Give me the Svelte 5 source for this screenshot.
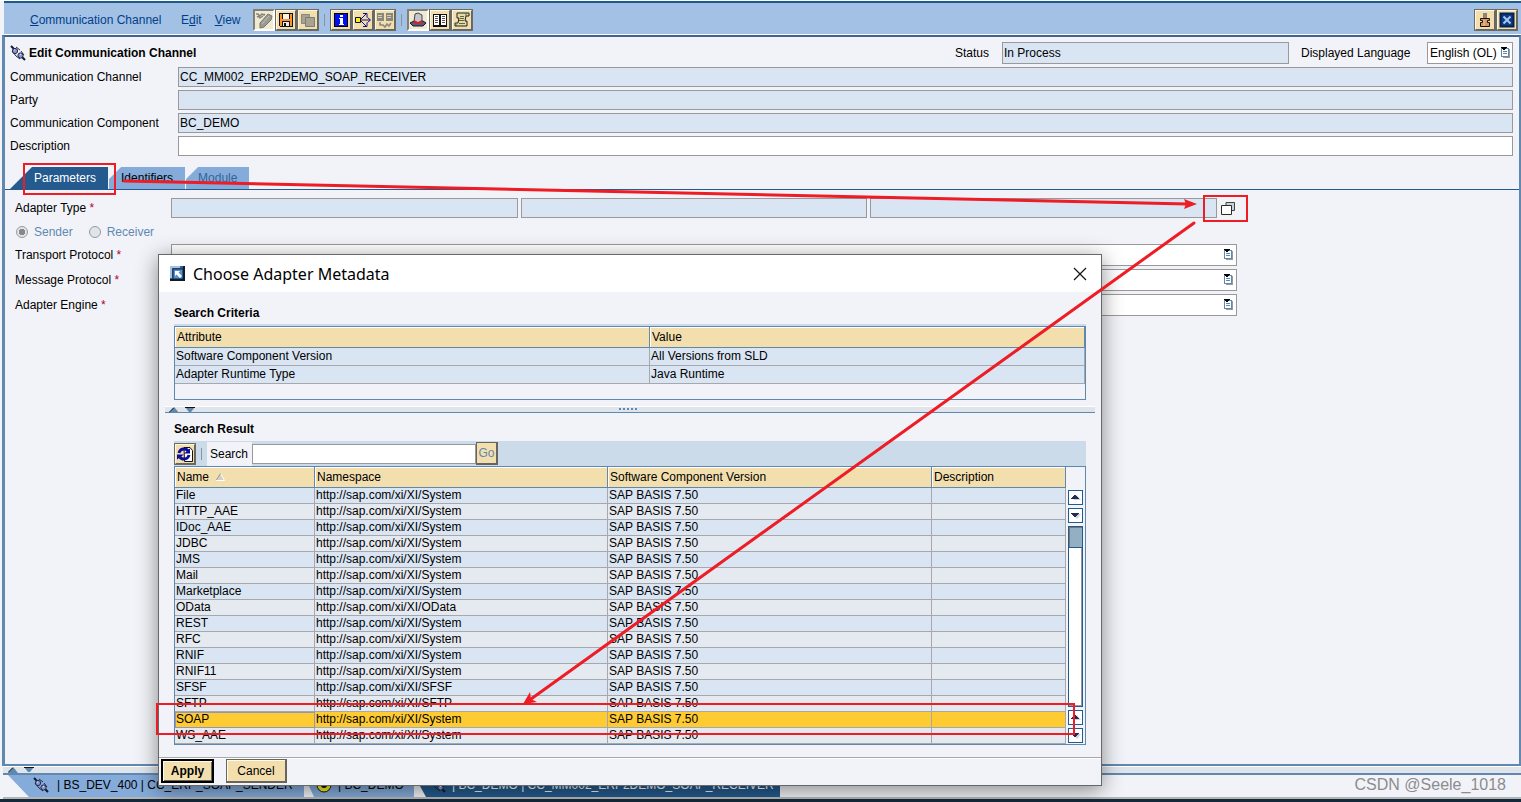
<script>
  const criteria = [
    ["Software Component Version", "All Versions from SLD"],
    ["Adapter Runtime Type", "Java Runtime"],
  ];

  const base = "http://sap.com/xi/XI/";
  const adapters = [
    ["File", "System"],
    ["HTTP_AAE", "System"],
    ["IDoc_AAE", "System"],
    ["JDBC", "System"],
    ["JMS", "System"],
    ["Mail", "System"],
    ["Marketplace", "System"],
    ["OData", "OData"],
    ["REST", "System"],
    ["RFC", "System"],
    ["RNIF", "System"],
    ["RNIF11", "System"],
    ["SFSF", "SFSF"],
    ["SFTP", "SFTP"],
    ["SOAP", "System"],
    ["WS_AAE", "System"],
  ];

  let selected = $state("SOAP");

  const fields = [
    { id: "channel", label: "Communication Channel", value: "CC_MM002_ERP2DEMO_SOAP_RECEIVER", locked: true },
    { id: "party", label: "Party", value: "", locked: true },
    { id: "component", label: "Communication Component", value: "BC_DEMO", locked: true },
    { id: "description", label: "Description", value: "", locked: false },
  ];

  const protocols = ["Transport Protocol", "Message Protocol", "Adapter Engine"];
</script>

{#snippet plug()}
  <svg class="plug" width="16" height="16" viewBox="0 0 16 16" aria-hidden="true">
    <path d="M1 1l4 4M11 11l4 4" stroke="#111a33" stroke-width="2" />
    <path d="M2 6l4 5M6 2l4 3M6 11l4 3M11 6l3 4" stroke="#20264a" />
    <circle cx="5" cy="6" r="2.6" fill="#8e98c8" stroke="#20264a" />
    <circle cx="10.5" cy="10.5" r="2.6" fill="#8e98c8" stroke="#20264a" />
    <path d="M4 5h1M10 9.500h1" stroke="#dde2f5" />
  </svg>
{/snippet}

{#snippet listIcon()}
  <svg class="list-icon" width="10" height="12" viewBox="0 0 10 12" shape-rendering="crispEdges" aria-hidden="true">
    <path d="M2 2h7v9h-7z" fill="#999" />
    <path d="M0 1h8v9h-8z" fill="#5f88ae" />
    <path d="M1 2h6v7h-6z" fill="#fff" />
    <path d="M2 4h4v1h-4zM2 6h4v1h-4z" fill="#5f88ae" />
    <path d="M0 0h6v1h-1v1h-1v1h-2v-1h-1v-1h-1z" fill="#000" />
  </svg>
{/snippet}

{#snippet grips()}
  <svg width="30" height="6" viewBox="0 0 30 6" aria-hidden="true">
    <path d="M0 6l4-5h2l4 5z" fill="#5f88ae" />
    <path d="M0 5.500l5-5" stroke="#111" />
    <path d="M16 0h10l-4 5h-2z" fill="#5f88ae" />
    <path d="M16 0.500h10" stroke="#111" />
  </svg>
{/snippet}

{#snippet arrow(down)}
  <button type="button" class="step" aria-label={down ? "Scroll down" : "Scroll up"}>
    <svg width="11" height="9" viewBox="0 0 11 9" aria-hidden="true">
      {#if down}
        <path d="M3 3h8l-4 5z" fill="#c5d3e6" />
        <path d="M1 2h8v1h-1v1h-1v1h-1v1h-2v-1h-1v-1h-1v-1h-1z" fill="#262b4b" />
      {:else}
        <path d="M3 7h8l-4-5z" fill="#c5d3e6" />
        <path d="M1 6h8v-1h-1v-1h-1v-1h-1v-1h-2v1h-1v1h-1v1h-1z" fill="#262b4b" />
      {/if}
    </svg>
  </button>
{/snippet}

<div class="screen">
  <div class="toolbar">
    <nav>
      <a href="#channel"><u>C</u>ommunication Channel</a>
      <a href="#edit">E<u>d</u>it</a>
      <a href="#view"><u>V</u>iew</a>
    </nav>
    <div class="tools">
      <button type="button" class="tool pressed" aria-label="Display or change">
        <svg width="18" height="18" viewBox="0 0 18 18">
          <path d="M1 3h2l2 2 2-2 2 1 1-1M2 6l2-1 1 2 3-2" fill="none" stroke="#85857f" stroke-width="1.500" />
          <path d="M5 12l8-9 4 2-1 4-7 7-4 1z" fill="#9a9a92" stroke="#77776f" />
          <path d="M7 13l7-8" stroke="#c6c1ac" />
        </svg>
      </button>
      <button type="button" class="tool" aria-label="Save">
        <svg width="18" height="18" viewBox="0 0 18 18" shape-rendering="crispEdges">
          <path d="M2 2h14v14h-13l-1-1z" fill="#111" />
          <path d="M3 3h2v12h-2zM13 3h2v12h-2zM5 8h8v2h-8z" fill="#f9952b" />
          <path d="M6 3h6v5h-6z" fill="#fdf3e2" />
          <path d="M6 11h6v4h-6z" fill="#e8e8f0" />
          <path d="M7 12h2v3h-2z" fill="#111" />
        </svg>
      </button>
      <button type="button" class="tool" aria-label="Copy">
        <svg width="18" height="18" viewBox="0 0 18 18">
          <path d="M2.500 3.500h8v9h-8z" fill="#a6a294" stroke="#8a877c" />
          <path d="M6.500 6.500h9v9h-9z" fill="#a6a294" stroke="#7e7b72" />
        </svg>
      </button>
      <span class="bar"></span>
      <button type="button" class="tool" aria-label="Information">
        <svg width="18" height="18" viewBox="0 0 18 18" shape-rendering="crispEdges">
          <path d="M2 2h14v14h-14z" fill="#000" />
          <path d="M3 3h12v12h-12z" fill="#0011ee" />
          <path d="M8 4h3v2h-3zM7 7h4v6h1v1h-5v-1h1v-5h-1z" fill="#fff" />
        </svg>
      </button>
      <button type="button" class="tool" aria-label="Where used">
        <svg width="18" height="18" viewBox="0 0 18 18">
          <path d="M6 9h10M6 9l6-6M6 9l6 6M13.500 6.500l3 2.500-3 2.500M9 2.500h4v4M9 15.500h4v-4" fill="none" stroke="#10108a" />
          <path d="M1.500 6.500h5v5h-5z" fill="#f8ee28" stroke="#111" />
        </svg>
      </button>
      <button type="button" class="tool" aria-label="Compare">
        <svg width="18" height="18" viewBox="0 0 18 18">
          <path d="M1 2h7v8h-7zM10 2h7v8h-7z" fill="#88887f" />
          <path d="M2 4.500h4M2 6.500h4M11 4.500h4M11 6.500h4" stroke="#d8d0b2" />
          <path d="M4 11v3h3l2 2 2-3 2 2 2-3" fill="none" stroke="#88887f" stroke-width="1.500" />
        </svg>
      </button>
      <span class="bar"></span>
      <button type="button" class="tool pressed" aria-label="Local view">
        <svg width="18" height="18" viewBox="0 0 18 18">
          <path d="M1 12l4-2h9l3 2-3 3h-10z" fill="#5a5a78" stroke="#181828" />
          <path d="M5 11l1-8 3-1 4 2v7l-4 1z" fill="#c4c7d2" stroke="#444" />
          <path d="M5 9l4 2 4-2v3l-4 1-4-1z" fill="#d8202a" />
        </svg>
      </button>
      <button type="button" class="tool" aria-label="Documentation">
        <svg width="18" height="18" viewBox="0 0 18 18" shape-rendering="crispEdges">
          <path d="M2 3h14v13h-14z" fill="#111" />
          <path d="M3 4h5v10h-5zM10 4h5v10h-5z" fill="#fff" />
          <path d="M4 5.500h3M4 7.500h3M4 9.500h3M4 11.500h3M11 5.500h3M11 7.500h3M11 9.500h3M11 11.500h3" stroke="#555" />
        </svg>
      </button>
      <button type="button" class="tool" aria-label="History">
        <svg width="18" height="18" viewBox="0 0 18 18">
          <path d="M4 2h12v3h-3l-1 5h2v5h-12v-3h3l1-5h-2z" fill="#e2dca6" stroke="#222" />
          <path d="M7 5.500h4M7 7.500h4M6 9.500h5M6 12.500h6M13 2v3M2 12l2 3" stroke="#66643c" />
        </svg>
      </button>
    </div>
    <div class="tools far">
      <button type="button" class="tool" aria-label="Pin">
        <svg width="18" height="18" viewBox="0 0 18 18">
          <path d="M9 2v5" stroke="#222" stroke-width="3" />
          <path d="M9 2v5" stroke="#eee" />
          <path d="M4.500 7.500h9v2h-2v2h2v4h-9v-4h2v-2h-2z" fill="#d39a68" stroke="#1a1108" />
          <path d="M8 9v6" stroke="#f3c79c" />
        </svg>
      </button>
      <button type="button" class="tool" aria-label="Close">
        <svg width="18" height="18" viewBox="0 0 18 18">
          <path d="M2.500 2.500h13v13h-13z" fill="#0b3c86" stroke="#06214f" stroke-width="2" />
          <path d="M5.500 5.500l7 7M12.500 5.500l-7 7" stroke="#a9c6ee" stroke-width="2" />
        </svg>
      </button>
    </div>
  </div>

  <main>
    <form>
      <div class="heading">
        {@render plug()}
        <h1>Edit Communication Channel</h1>
        <label class="status-label" for="status">Status</label>
        <input id="status" class="locked" value="In Process" readonly />
        <label class="language-label" for="language">Displayed Language</label>
        <div class="language">
          <select id="language"><option>English (OL)</option></select>
          {@render listIcon()}
        </div>
      </div>
      <div class="fields">
        {#each fields as field (field.id)}
          <label for={field.id}>{field.label}</label>
          <input id={field.id} class:locked={field.locked} value={field.value} readonly={field.locked} />
        {/each}
      </div>
    </form>

    <div class="tabs" role="tablist">
      <button type="button" role="tab" class="tab active" aria-selected="true">Parameters</button>
      <button type="button" role="tab" class="tab" aria-selected="false">Identifiers</button>
      <button type="button" role="tab" class="tab muted" aria-selected="false">Module</button>
    </div>

    <section class="params">
      <div class="row adapter">
        <label for="adapter-name">Adapter Type <i>*</i></label>
        <input id="adapter-name" class="locked" readonly />
        <input class="locked" aria-label="Adapter namespace" readonly />
        <input class="locked" aria-label="Adapter software component version" readonly />
        <button type="button" class="pick" aria-label="Choose adapter">
          <svg width="15" height="15" viewBox="0 0 15 15">
            <path d="M5 1.500h8.500v8h-8.500z" fill="#c3d3dc" stroke="#46463e" />
            <path d="M0.500 4.500h10v9h-10z" fill="#fff" stroke="#2c2c24" />
          </svg>
        </button>
      </div>
      <div class="direction">
        <label><input type="radio" name="direction" checked disabled />Sender</label>
        <label><input type="radio" name="direction" disabled />Receiver</label>
      </div>
      {#each protocols as protocol, i}
        <div class="row">
          <label for="protocol-{i}">{protocol} <i>*</i></label>
          <div class="combo">
            <select id="protocol-{i}"><option></option></select>
            {@render listIcon()}
          </div>
        </div>
      {/each}
    </section>
  </main>

  <div class="splitter">{@render grips()}</div>

  <div class="objects">
    <button type="button" class="object first">{@render plug()}<span>| BS_DEV_400 | CC_ERP_SOAP_SENDER</span></button>
    <button type="button" class="object second">
      <svg width="16" height="16" viewBox="0 0 16 16" aria-hidden="true">
        <circle cx="8" cy="8" r="7" fill="#f5ec1d" stroke="#111" />
        <circle cx="8" cy="8" r="3" fill="#111" />
      </svg>
      <span>| BC_DEMO</span>
    </button>
    <button type="button" class="object third">{@render plug()}<span>| BC_DEMO | CC_MM002_ERP2DEMO_SOAP_RECEIVER</span></button>
    <span class="credit">CSDN @Seele_1018</span>
  </div>
  <div class="taskbar"></div>

  <div class="dialog" role="dialog" aria-labelledby="dialog-title">
    <header>
      <svg width="17" height="17" viewBox="0 0 17 17" aria-hidden="true">
        <path d="M1 1h15v15h-15z" fill="#0d1b2c" />
        <path d="M1 1h13v13h-13z" fill="#2f62a0" />
        <path d="M1 1h10v2h-8v10h-2z" fill="#9fc3e8" />
        <path d="M4 4h10v10h-10z" fill="#5b8fca" stroke="#123" />
        <path d="M6 6h5l-1.500 1.500 3.500 3.500-2 2-3.500-3.500-1.500 1.500z" fill="#fff" />
      </svg>
      <h2 id="dialog-title">Choose Adapter Metadata</h2>
      <button type="button" class="close" aria-label="Close dialog">
        <svg width="14" height="14" viewBox="0 0 14 14"><path d="M1 1l12 12M13 1l-12 12" stroke="#111" stroke-width="1.200" /></svg>
      </button>
    </header>

    <h3>Search Criteria</h3>
    <div class="criteria">
      <table>
        <thead>
          <tr><th>Attribute</th><th>Value</th></tr>
        </thead>
        <tbody>
          {#each criteria as [attribute, value]}
            <tr><td>{attribute}</td><td>{value}</td></tr>
          {/each}
        </tbody>
      </table>
    </div>

    <div class="divider">
      {@render grips()}
      <svg class="dots" width="20" height="3" viewBox="0 0 20 3" aria-hidden="true">
        <path d="M0 1h20" stroke="#5f88ae" stroke-width="2" stroke-dasharray="2 2" />
      </svg>
    </div>

    <h3>Search Result</h3>
    <div class="search">
      <button type="button" class="tool" aria-label="Refresh">
        <svg width="18" height="18" viewBox="0 0 18 18">
          <path d="M8 2.500h6l2.500 3v11h-8z" fill="#fff" stroke="#111" />
          <path d="M3 8q1-4 5-4 3 0 4 2M13 10q-1 4-5 4-3 0-4-2" fill="none" stroke="#0b0b9c" stroke-width="3" />
          <path d="M8 8.500h6v-5zM1 9.500h7l-7 5z" fill="#0b0b9c" />
        </svg>
      </button>
      <span class="bar"></span>
      <label for="search">Search</label>
      <input id="search" />
      <button type="button" class="go">Go</button>
    </div>
    <div class="results">
      <table>
        <colgroup><col class="c-name" /><col class="c-space" /><col class="c-version" /><col /></colgroup>
        <thead>
          <tr>
            <th>Name
              <svg width="9" height="8" viewBox="0 0 9 8" aria-label="ascending">
                <path d="M0.500 7.500h8l-4-7z" fill="#d5cfc0" stroke="#fff" />
                <path d="M0.500 7l4-6.500" stroke="#8d8875" />
              </svg>
            </th>
            <th>Namespace</th>
            <th>Software Component Version</th>
            <th>Description</th>
          </tr>
        </thead>
        <tbody>
          {#each adapters as [name, space] (name)}
            <tr class:selected={name === selected} onclick={() => (selected = name)}>
              <td>{name}</td>
              <td>{base}{space}</td>
              <td>SAP BASIS 7.50</td>
              <td></td>
            </tr>
          {/each}
        </tbody>
      </table>
      <div class="scroll">
        {@render arrow(false)}
        {@render arrow(true)}
        <div class="track"><div class="thumb"></div></div>
        {@render arrow(false)}
        {@render arrow(true)}
      </div>
    </div>

    <footer>
      <button type="button" class="apply">Apply</button>
      <button type="button">Cancel</button>
    </footer>
  </div>

  <svg class="marks" width="1521" height="802" viewBox="0 0 1521 802" aria-hidden="true">
    <g fill="none" stroke="#ee1c24" stroke-width="2">
      <rect x="24" y="164" width="91" height="30" />
      <rect x="1204" y="196" width="43" height="25" />
      <rect x="157" y="704" width="917" height="30" />
    </g>
    <path d="M124 181L1188 204M1194 223L531 699" stroke="#ee1c24" stroke-width="3" stroke-linecap="round" />
    <path d="M1197 204l-13-5 2 5-2 5zM523 704l7-12 1 7 6 3z" fill="#ee1c24" />
  </svg>
</div>

<style>
  :global(body) {
    background: #f2f3f8;
    overflow: hidden;
  }

  .screen {
    position: relative;
    display: flex;
    flex-direction: column;
    box-sizing: border-box;
    min-height: 100vh;
    border-top: 1px solid #fff;
    font: 12px/16px "Liberation Sans", Arial, sans-serif;
    color: #000;
  }

  .screen :is(input, select, button) {
    box-sizing: border-box;
    margin: 0;
    border-radius: 0;
    font: inherit;
    color: inherit;
  }

  input,
  select {
    height: 20px;
    min-width: 0;
    padding: 0 1px;
    border: 1px solid #999;
    background: #fff;
    outline: none;
  }

  select {
    appearance: none;
    width: 100%;
    height: 22px;
    padding: 0 2px;
  }

  button {
    padding: 0;
    border: 0;
    background: none;
  }

  .locked {
    background: #d9e5f3;
  }

  .toolbar {
    display: flex;
    align-items: center;
    height: 34px;
    box-sizing: border-box;
    margin-left: 4px;
    padding: 2px 3px 0 26px;
    border-top: 2px solid #1c5a8a;
    border-bottom: 1px solid #fff;
    background: #a3c0e5;
  }

  nav {
    display: flex;
    gap: 13px;
    width: 223px;
  }

  nav a {
    color: #003f87;
    text-decoration: none;
  }

  nav a:first-child {
    min-width: 138px;
  }

  .tools {
    display: flex;
    align-items: center;
  }

  .far {
    margin-left: auto;
  }

  .tool {
    display: grid;
    place-items: center;
    width: 22px;
    height: 22px;
  }

  .screen .tool {
    border: 2px solid;
    border-color: #fff8df #66665f #66665f #fff8df;
    outline: 1px solid #6b6b66;
    outline-offset: -1px;
    background: #f3dfae;
  }

  .screen .pressed {
    border-color: #808078 #fff #fff #808078;
    outline: none;
    background: #f1ead0;
  }

  .bar {
    width: 1px;
    height: 12px;
    margin: 0 5px;
    background: #8a94a0;
  }

  main {
    flex: 1;
    border: solid #6189b0;
    border-width: 2px 2px 2px 3px;
    border-top-color: #41648a;
    margin-left: 2px;
  }

  .heading {
    display: flex;
    align-items: center;
    height: 22px;
    padding: 5px 6px 3px 5px;
  }

  h1,
  h2,
  h3 {
    margin: 0;
    font-size: 12px;
    line-height: 16px;
  }

  .heading h1 {
    margin-left: 3px;
  }

  .status-label {
    width: 35px;
    margin-left: auto;
    margin-right: 12px;
  }

  .language-label {
    width: 114px;
  }

  .heading input {
    width: 287px;
    height: 22px;
    margin-right: 12px;
  }

  .language {
    width: 86px;
    margin-left: 12px;
  }

  .language,
  .combo {
    position: relative;
    display: flex;
  }

  .list-icon {
    position: absolute;
    top: 5px;
    right: 2px;
    pointer-events: none;
  }

  .fields {
    display: grid;
    grid-template-columns: 168px 1fr;
    row-gap: 3px;
    align-items: center;
    padding: 0 6px 11px 5px;
  }

  .tabs {
    display: flex;
    height: 22px;
    padding-left: 5px;
    border-bottom: 1px solid #245a8d;
  }

  .screen .tab {
    padding: 0 12px 0 24px;
    margin-right: 1px;
    background: #84abda;
    clip-path: polygon(0 100%, 22px 0, 100% 0, 100% 100%);
  }

  .screen .tab:not(.active) {
    padding: 0 12px;
    clip-path: polygon(0 12px, 12px 0, 100% 0, 100% 100%, 0 100%);
  }

  .screen .tab.active {
    background: #245a8d;
    color: #fff;
  }

  .screen .tab.muted {
    color: #2f659c;
  }

  .params {
    padding: 8px 0 0 10px;
  }

  .row {
    display: flex;
    align-items: center;
    width: calc(80% + 19px);
    margin-bottom: 3px;
  }

  .row > label {
    flex: 0 0 156px;
  }

  .row i {
    font-style: normal;
    color: #b00030;
  }

  .adapter {
    gap: 3px;
  }

  .adapter > label {
    flex-basis: 153px;
  }

  .adapter input {
    flex: 1;
  }

  .screen .pick {
    display: flex;
    margin: 0 1px;
  }

  .combo {
    flex: 1;
  }

  .combo .list-icon {
    right: 3px;
  }

  .direction {
    display: flex;
    gap: 15px;
    height: 22px;
    align-items: center;
    margin-bottom: 1px;
    color: #6189b0;
  }

  .direction label {
    display: flex;
    align-items: center;
    gap: 6px;
  }

  .screen .direction input {
    appearance: none;
    width: 12px;
    height: 12px;
    margin-left: 1px;
    padding: 0;
    border: 1px solid #999;
    border-radius: 50%;
    background: #dfe5ec;
  }

  .screen .direction input:checked {
    background: radial-gradient(circle, #888 0 3px, #dfe5ec 3px);
  }

  .splitter {
    display: flex;
    height: 6px;
    margin-left: 3px;
    padding-left: 5px;
    border-top: 1px solid #fff;
    border-bottom: 2px solid #6189b0;
    background: #e0e5ec;
  }

  .objects {
    display: flex;
    height: 22px;
    margin-left: 3px;
    border-bottom: 2px solid #b5b5b5;
  }

  .screen .object {
    display: flex;
    align-items: center;
    gap: 8px;
    background: #84abda;
    padding-bottom: 2px;
  }

  .object span {
    white-space: nowrap;
  }

  .screen .first {
    width: 301px;
    padding-left: 30px;
    clip-path: polygon(5px 0, 100% 0, 100% 100%, 26px 100%);
  }

  .screen .second {
    width: 110px;
    gap: 6px;
    padding-left: 12px;
    clip-path: polygon(0 0, 100% 0, 100% 100%, 10px 100%);
  }

  .screen .third {
    width: 366px;
    gap: 6px;
    padding-left: 16px;
    background: #245a8d;
    color: #fff;
    clip-path: polygon(0 0, 100% 0, 100% 100%, 12px 100%);
  }

  .credit {
    margin: 2px 15px 0 auto;
    font-size: 16px;
    color: #8c8c8f;
  }

  .taskbar {
    height: 3px;
    background: #14293a;
  }

  .dialog {
    position: absolute;
    top: 253px;
    left: 158px;
    width: 942px;
    border: 1px solid #66686c;
    background: #f2f3f8;
    box-shadow: 0 4px 20px rgba(0, 0, 0, 0.45);
  }

  .dialog header {
    display: flex;
    align-items: center;
    height: 37px;
    padding: 0 14px 0 10px;
    background: #fff;
  }

  .dialog h2 {
    margin-left: 7px;
    font: 16px/22px "Noto Sans", sans-serif;
  }

  .screen .close {
    display: flex;
    margin-left: auto;
  }

  .dialog h3 {
    margin-left: 15px;
    padding: 13px 0 5px;
  }

  table {
    width: 100%;
    border-collapse: separate;
    border-spacing: 0;
    table-layout: fixed;
  }

  th {
    height: 20px;
    padding: 0 2px;
    border: solid #5f88ae;
    border-width: 0 1px 1px 0;
    background: #f3dfae;
    box-shadow: inset 1px 1px #fff;
    font-weight: normal;
    text-align: left;
  }

  th svg {
    margin-left: 4px;
  }

  td {
    height: 15px;
    padding: 0 1px;
    border: solid #a8a8ac;
    border-width: 0 1px 1px 0;
    line-height: 15px;
    white-space: nowrap;
  }

  tr:nth-child(odd) td {
    background: #d9e5f3;
  }

  tr:nth-child(even) td {
    background: #e5e9f0;
  }

  .criteria {
    margin: 0 15px;
    padding-bottom: 15px;
    border: 1px solid #5f88ae;
    box-shadow: 0 -2px #cbdbea;
  }

  .criteria th:first-child {
    width: 470px;
  }

  .criteria td {
    height: 17px;
    line-height: 17px;
  }

  .criteria tbody tr:nth-child(n) td {
    background: #d9e5f3;
  }

  .divider {
    position: relative;
    display: flex;
    height: 5px;
    margin: 6px 6px 0;
    padding-left: 4px;
    border-top: 1px solid #fff;
    border-bottom: 1px solid #5f88ae;
    background: #e0e5ec;
  }

  .dots {
    position: absolute;
    top: 1px;
    left: calc(50% - 11px);
  }

  .divider + h3 {
    padding: 8px 0 4px;
  }

  .search {
    display: flex;
    align-items: center;
    height: 25px;
    margin: 0 15px;
    background: #cbdbea;
  }

  .search label {
    padding: 4px 4px 4px 3px;
    background: #f2f3f8;
  }

  .search input {
    width: 224px;
  }

  .screen .go {
    width: 22px;
    height: 23px;
    border: 1px solid #66665f;
    border-width: 1px 2px 2px 1px;
    background: #f3dfae;
    color: #6189b0;
  }

  .results {
    display: flex;
    margin: 0 15px;
    border: 1px solid #5f88ae;
  }

  .c-name {
    width: 140px;
  }

  .c-space {
    width: 293px;
  }

  .c-version {
    width: 324px;
  }

  .selected:nth-child(n) td {
    background: #ffcb32;
  }

  .selected td:first-child {
    outline: 1px solid #9a93b8;
    outline-offset: -1px;
  }

  .scroll {
    display: flex;
    flex: 0 0 19px;
    flex-direction: column;
    align-items: center;
    gap: 3px;
    padding: 23px 0 1px;
    box-sizing: border-box;
  }

  .screen .step {
    display: grid;
    place-items: center;
    width: 15px;
    height: 15px;
    border: 1px solid #245a8d;
    background: #fff;
  }

  .track {
    flex: 1;
    width: 15px;
    box-sizing: border-box;
    border: 1px solid #245a8d;
    background: #fff;
    box-shadow: inset -1px -1px #999;
  }

  .thumb {
    height: 20px;
    border-bottom: 1px solid #245a8d;
    background: #94aec2;
    box-shadow: inset 1px 1px #777;
  }

  footer {
    display: flex;
    gap: 12px;
    height: 25px;
    margin-top: 12px;
    padding: 1px 2px;
    border-top: 1px solid #a8a8ac;
    box-shadow: inset 0 1px #fff;
  }

  .screen footer button {
    width: 61px;
    height: 24px;
    border: 1px solid #66665f;
    border-width: 1px 2px 2px 1px;
    background: #f3dfae;
    box-shadow: inset 1px 1px #fffbe8;
  }

  .screen footer .apply {
    width: 53px;
    border: 2px solid #000;
    box-shadow: inset 1px 1px #fffbe8, inset -1px -1px #66665f;
    font-weight: bold;
  }

  .marks {
    position: absolute;
    top: -1px;
    left: 0;
    pointer-events: none;
  }
</style>
